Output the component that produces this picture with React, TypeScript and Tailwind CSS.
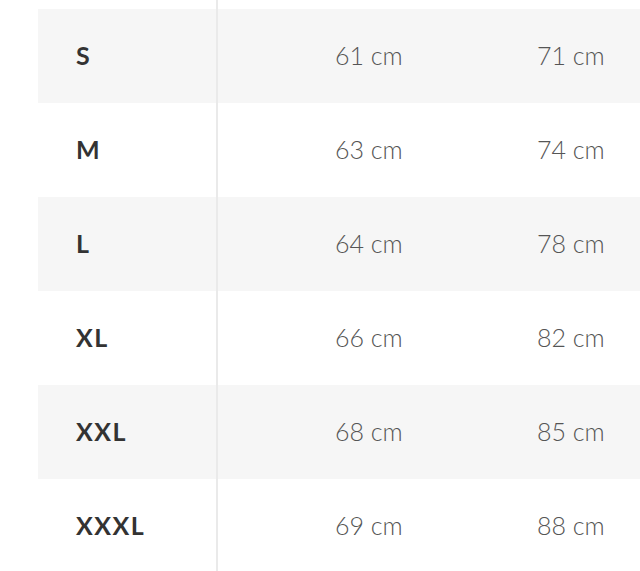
import React from "react";

const rows = [
  { s: "S", a: "61 cm", b: "71 cm" },
  { s: "M", a: "63 cm", b: "74 cm" },
  { s: "L", a: "64 cm", b: "78 cm" },
  { s: "XL", a: "66 cm", b: "82 cm" },
  { s: "XXL", a: "68 cm", b: "85 cm" },
  { s: "XXXL", a: "69 cm", b: "88 cm" },
];

export default function App() {
  return (
    <div className="w-[640px] h-[571px] overflow-hidden bg-white" style={{ fontFamily: "Lato, 'Open Sans', sans-serif" }}>
      <div className="flex flex-col pl-[38px]">
        <div className="flex h-[9px]">
          <div className="w-[180px] border-r-2 border-[#eaeaea]" />
        </div>
        {rows.map((r, i) => (
          <div key={r.s} className={`flex h-[94px] items-center ${i % 2 === 0 ? "bg-[#f6f6f6]" : "bg-white"}`}>
            <div className="w-[180px] h-full flex items-center pl-[38px] border-r-2 border-[#eaeaea] text-[25px] font-bold tracking-[1.5px] text-[#333333]">
              {r.s}
            </div>
            <div className="w-[319px] pl-[117px] text-[25px] font-light text-[#555555] whitespace-nowrap">{r.a}</div>
            <div className="text-[25px] font-light text-[#555555] whitespace-nowrap">{r.b}</div>
          </div>
        ))}
      </div>
    </div>
  );
}
